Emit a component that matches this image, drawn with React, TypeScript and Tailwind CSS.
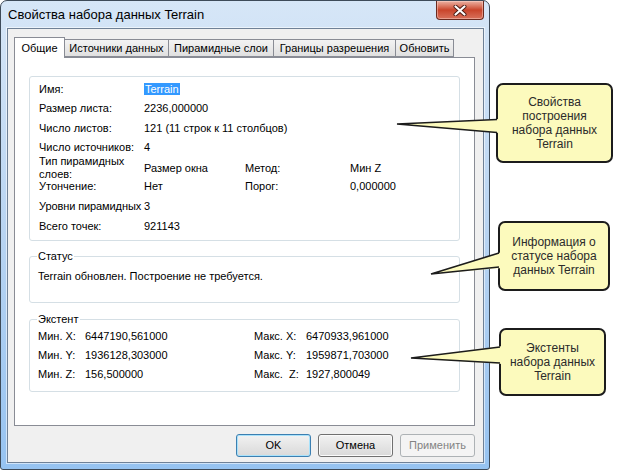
import React from "react";

const tabs = [
  { label: "Общие", cls: "w-[51px] h-[21px] bg-white border-b-0 z-10 -mb-px" },
  { label: "Источники данных", cls: "w-[105px] h-[18px] mt-[2px] -ml-px bg-gradient-to-b from-[#f3f3f3] to-[#e0e0e0]" },
  { label: "Пирамидные слои", cls: "w-[106px] h-[18px] mt-[2px] -ml-px bg-gradient-to-b from-[#f3f3f3] to-[#e0e0e0]" },
  { label: "Границы разрешения", cls: "w-[123px] h-[18px] mt-[2px] -ml-px bg-gradient-to-b from-[#f3f3f3] to-[#e0e0e0]" },
  { label: "Обновить", cls: "w-[59px] h-[18px] mt-[2px] -ml-px bg-gradient-to-b from-[#f3f3f3] to-[#e0e0e0]" },
];

const extent = [
  { l1: "Мин. X:", v1: "6447190,561000", l2: "Макс. X:", v2: "6470933,961000" },
  { l1: "Мин. Y:", v1: "1936128,303000", l2: "Макс. Y:", v2: "1959871,703000" },
  { l1: "Мин. Z:", v1: "156,500000", l2: "Макс.  Z:", v2: "1927,800049" },
];

const Row = ({ label, children, h = "h-[20px]" }: { label: string; children?: React.ReactNode; h?: string }) => (
  <div className={`flex items-center ${h}`}>
    <div className="w-[105px] shrink-0 whitespace-nowrap">{label}</div>
    <div className="whitespace-nowrap">{children}</div>
  </div>
);

const Callout = ({ cls, lines }: { cls: string; lines: string[] }) => (
  <div
    className={`absolute flex flex-col items-center justify-center rounded-[7px] border-2 border-[#1c1c1c] bg-[#fcfabd] text-[12px] leading-[14px] text-[#2b2b2b] ${cls}`}
  >
    {lines.map((t) => (
      <div key={t}>{t}</div>
    ))}
  </div>
);

export default function App() {
  return (
    <div className="relative h-[471px] w-[617px] overflow-hidden bg-white font-['Liberation_Sans',Arial,sans-serif] text-[11px] text-black">
      {/* Window */}
      <div className="flex h-[470px] w-[490px] flex-col rounded-t-[7px] rounded-b-[3px] border border-[#3e4b59] bg-gradient-to-b from-[#d6e6f7] via-[#b8d4f2] to-[#96c3f1]">
        {/* Title bar */}
        <div className="flex h-[27px] items-start justify-between">
          <div className="pl-[7px] pt-[6px] text-[13px] leading-[16px] text-black">Свойства набора данных Terrain</div>
          <div className="mr-[5px] flex h-[19px] w-[48px] items-center justify-center rounded-b-[4px] border border-t-0 border-[#6b2a1f] bg-gradient-to-b from-[#eab1a3] via-[#c9442a] to-[#d8705a] shadow-[inset_0_0_0_1px_rgba(255,220,210,0.45)]">
            <svg width="14" height="11" viewBox="0 0 14 11">
              <path d="M2.5 1.5 L11.5 9.5 M11.5 1.5 L2.5 9.5" stroke="#4a1a12" strokeWidth="4" strokeLinecap="round" />
              <path d="M2.5 1.5 L11.5 9.5 M11.5 1.5 L2.5 9.5" stroke="#ffffff" strokeWidth="2.2" strokeLinecap="round" />
            </svg>
          </div>
        </div>

        {/* Client area */}
        <div className="ml-[6px] mr-[5px] flex h-[435px] flex-col border border-[#6f8197] bg-[#f0f0f0] shadow-[0_0_0_1px_rgba(255,255,255,0.55)]">
          {/* Tabs */}
          <div className="ml-[6px] mt-[8px] flex items-start">
            {tabs.map((t) => (
              <div
                key={t.label}
                className={`relative flex items-center justify-center border border-[#898c95] text-[11px] leading-[13px] whitespace-nowrap ${t.cls}`}
              >
                {t.label}
              </div>
            ))}
          </div>

          {/* Tab panel */}
          <div className="ml-[6px] mr-[8px] flex h-[369px] flex-col border border-[#898c95] bg-white px-[14px] pt-[18px]">
            {/* Properties box */}
            <div className="flex h-[165px] flex-col rounded-[3px] border border-[#d5dfe5] pl-[9px] pt-[2px]">
              <Row label="Имя:">
                <span className="bg-[#3399ff] px-px text-white">Terrain</span>
              </Row>
              <Row label="Размер листа:" h="h-[19px]">2236,000000</Row>
              <Row label="Число листов:">121 (11 строк к 11 столбцов)</Row>
              <Row label="Число источников:" h="h-[19px]">4</Row>
              <div className="flex h-[22px] items-center">
                <div className="w-[105px] shrink-0 leading-[13px]">Тип пирамидных слоев:</div>
                <div className="w-[101px] shrink-0">Размер окна</div>
                <div className="w-[105px] shrink-0">Метод:</div>
                <div>Мин Z</div>
              </div>
              <div className="flex h-[14px] items-center">
                <div className="w-[105px] shrink-0">Утончение:</div>
                <div className="w-[101px] shrink-0">Нет</div>
                <div className="w-[105px] shrink-0">Порог:</div>
                <div>0,000000</div>
              </div>
              <div className="mt-[3px] flex h-[20px] items-center">
                <div className="w-[104px] shrink-0 whitespace-nowrap tracking-[-0.1px]">Уровни пирамидных</div>
                <div className="pl-px">3</div>
              </div>
              <Row label="Всего точек:">921143</Row>
            </div>

            {/* Status */}
            <fieldset className="mt-[9px] h-[53px] rounded-[3px] border border-[#d5dfe5] pl-[7px]">
              <legend className="px-px leading-[13px]">Статус</legend>
              <div className="ml-px pt-[7px] leading-[13px]">Terrain обновлен. Построение не требуется.</div>
            </fieldset>

            {/* Extent */}
            <fieldset className="mt-[10px] h-[79px] rounded-[3px] border border-[#d5dfe5] pl-[7px]">
              <legend className="px-px leading-[13px]">Экстент</legend>
              <div className="ml-px pt-[1px]">
                {extent.map((r) => (
                  <div key={r.l1} className="flex h-[19px] items-center whitespace-pre">
                    <div className="w-[47px] shrink-0">{r.l1}</div>
                    <div className="w-[169px] shrink-0">{r.v1}</div>
                    <div className="w-[52px] shrink-0">{r.l2}</div>
                    <div>{r.v2}</div>
                  </div>
                ))}
              </div>
            </fieldset>
          </div>

          {/* Buttons */}
          <div className="mr-[8px] mt-[8px] flex justify-end gap-[7px]">
            <button className="h-[23px] w-[75px] rounded-[3px] border border-[#3c7fb1] bg-gradient-to-b from-[#f2f2f2] to-[#d9d9d9] text-[11px] shadow-[inset_0_0_0_1px_#a9e2fb]">
              OK
            </button>
            <button className="h-[23px] w-[75px] rounded-[3px] border border-[#707070] bg-gradient-to-b from-[#f2f2f2] to-[#d9d9d9] text-[11px] shadow-[inset_0_0_0_1px_#fbfbfb]">
              Отмена
            </button>
            <button className="h-[23px] w-[75px] rounded-[3px] border border-[#adb2b5] bg-[#f4f4f4] text-[11px] text-[#838383]">
              Применить
            </button>
          </div>
        </div>
      </div>

      {/* Callouts */}
      <Callout cls="left-[496px] top-[83px] h-[80px] w-[117px]" lines={["Свойства", "построения", "набора данных", "Terrain"]} />
      <Callout cls="left-[498px] top-[221px] h-[70px] w-[112px]" lines={["Информация о", "статусе набора", "данных Terrain"]} />
      <Callout cls="left-[499px] top-[328px] h-[68px] w-[107px]" lines={["Экстенты", "набора данных", "Terrain"]} />

      {/* Pointers */}
      <svg className="pointer-events-none absolute left-0 top-0" width="617" height="471" viewBox="0 0 617 471">
        <polygon points="397,124 500,119 500,133" fill="#fcfabd" />
        <polyline points="497,119.5 397,124 497,132.5" fill="none" stroke="#1c1c1c" strokeWidth="1.6" strokeLinejoin="miter" />
        <polygon points="431,274 502,252 502,268" fill="#fcfabd" />
        <polyline points="499,253 431,274 499,267" fill="none" stroke="#1c1c1c" strokeWidth="1.6" />
        <polygon points="411,358 503,346 503,364" fill="#fcfabd" />
        <polyline points="500,347 411,358 500,363" fill="none" stroke="#1c1c1c" strokeWidth="1.6" />
      </svg>
    </div>
  );
}
